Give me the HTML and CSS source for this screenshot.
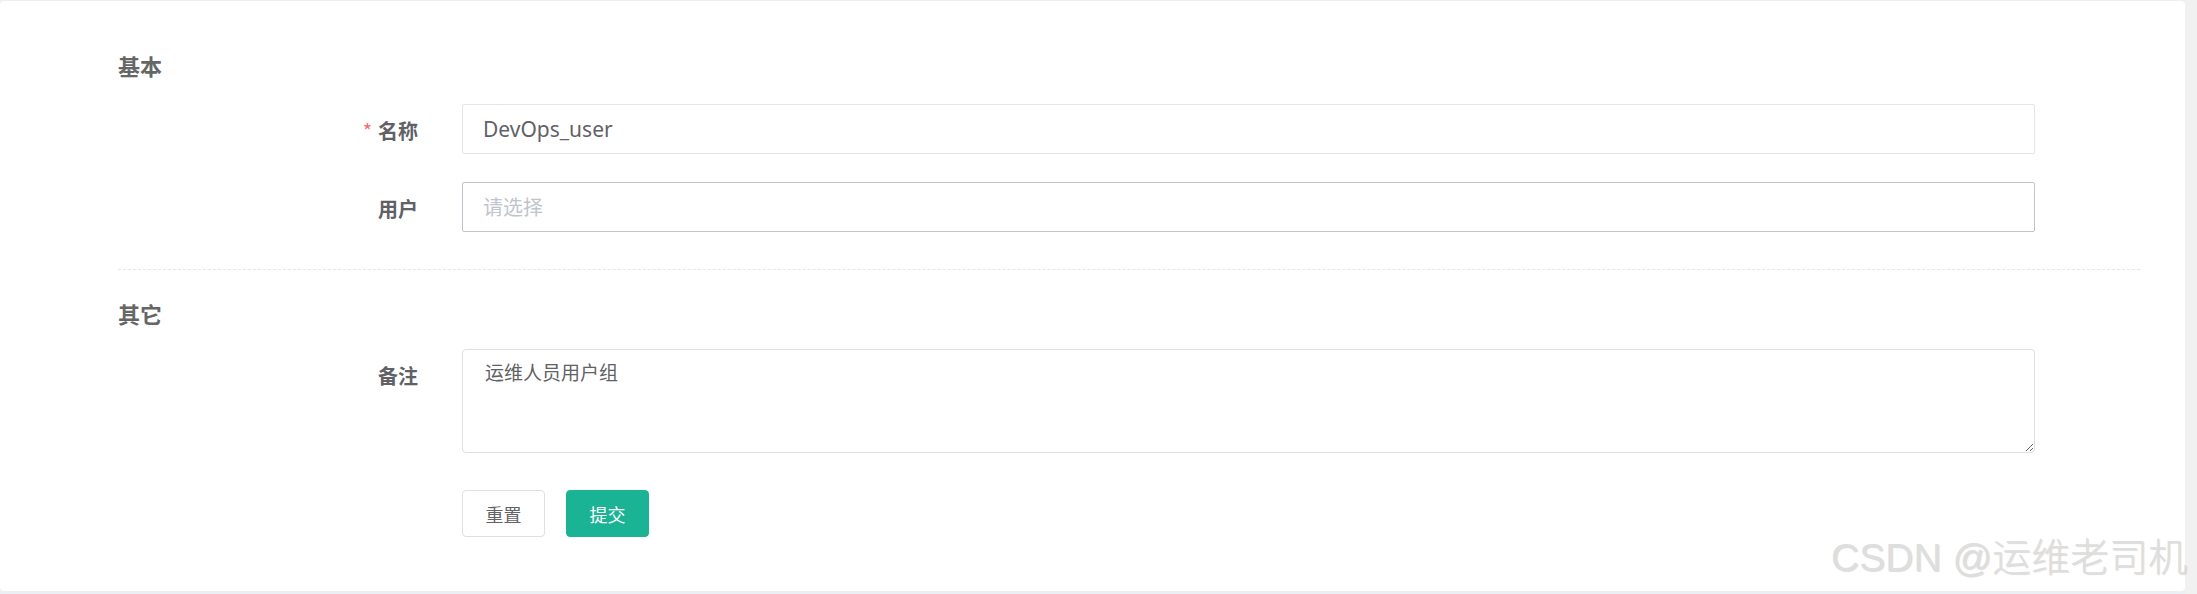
FILE: index.html
```html
<!DOCTYPE html>
<html lang="zh-CN">
<head>
<meta charset="utf-8">
<title>用户组</title>
<link rel="stylesheet" href="styles.css">
</head>
<body>
<div class="page">
  <main class="main">
    <div class="card">
      <h3 class="section-title">基本</h3>
      <div class="form-row">
        <label class="form-label"><span class="required">*</span>名称</label>
        <input class="form-input" type="text" value="DevOps_user">
      </div>
      <div class="form-row row-second">
        <label class="form-label">用户</label>
        <input class="form-input input-hover" type="text" placeholder="请选择">
      </div>
      <div class="divider"></div>
      <h3 class="section-title title-other">其它</h3>
      <div class="form-row row-textarea">
        <label class="form-label">备注</label>
        <textarea class="form-textarea">运维人员用户组</textarea>
      </div>
      <div class="form-row row-buttons">
        <span></span>
        <div class="buttons">
          <button class="btn btn-default" type="button">重置</button>
          <button class="btn btn-primary" type="button">提交</button>
        </div>
      </div>
      <div class="watermark">CSDN @运维老司机</div>
    </div>
  </main>
  <div class="scroll-track"></div>
</div>
</body>
</html>
```

FILE: styles.css
```css
html, body {
  margin: 0;
  padding: 0;
}
body {
  font-family: "Noto Sans", "Noto Sans CJK SC", sans-serif;
  color: #606266;
  width: 2197px;
  height: 594px;
  overflow: hidden;
}
.page {
  display: flex;
  height: 594px;
}
.main {
  flex: 1;
  background: #eceff4;
  padding: 1px 0 3px 0;
}
.scroll-track {
  width: 12px;
  background: #f1f1f1;
}
.card {
  position: relative;
  box-sizing: border-box;
  height: 590px;
  background: #ffffff;
  border-radius: 4px;
  padding: 49px 45px 0 118px;
}
.section-title {
  margin: 0;
  font-family: "Noto Sans CJK SC", sans-serif;
  font-size: 22px;
  line-height: 30px;
  font-weight: 700;
  color: #666666;
}
.form-row {
  display: grid;
  grid-template-columns: 300px 1573px;
  column-gap: 44px;
  align-items: start;
  margin-top: 24px;
}
.row-second {
  margin-top: 28px;
}
.form-label {
  font-family: "Noto Sans CJK SC", sans-serif;
  font-size: 20px;
  font-weight: 700;
  line-height: 50px;
  padding-top: 2px;
  height: 48px;
  text-align: right;
  color: #5f6166;
}
.required {
  color: #f56c6c;
  font-weight: 400;
  margin-right: 6px;
  font-size: 20px;
}
.form-input {
  box-sizing: border-box;
  height: 50px;
  width: 100%;
  border: 1px solid #e5e5e5;
  border-radius: 2px;
  padding: 0 20px;
  font-family: "Noto Sans", "Noto Sans CJK SC", sans-serif;
  font-size: 21px;
  color: #5f6166;
  outline: none;
  background: #fff;
}
.input-hover {
  border-color: #bfc5cc;
}
.form-input::placeholder {
  color: #c0c4cc;
  font-family: "Noto Sans CJK SC", sans-serif;
  font-size: 20px;
}
.divider {
  margin-top: 37px;
  border-top: 1px dashed #e6e6e6;
}
.title-other {
  margin-top: 28px;
}
.row-textarea {
  margin-top: 21px;
}
.form-textarea {
  box-sizing: border-box;
  width: 100%;
  height: 104px;
  border: 1px solid #dcdfe6;
  border-radius: 4px;
  padding: 7px 22px;
  font-family: "Noto Sans CJK SC", sans-serif;
  font-size: 19px;
  line-height: 30px;
  color: #606266;
  resize: both;
  outline: none;
}
.row-buttons {
  margin-top: 37px;
}
.buttons {
  display: flex;
  gap: 21px;
}
.btn {
  box-sizing: border-box;
  width: 83px;
  height: 47px;
  border-radius: 4px;
  font-family: "Noto Sans CJK SC", sans-serif;
  font-size: 18px;
  padding: 0;
  cursor: pointer;
}
.btn-default {
  background: #ffffff;
  border: 1px solid #dcdfe6;
  color: #606266;
}
.btn-primary {
  background: #1ab394;
  border: 1px solid #1ab394;
  color: #ffffff;
}
.watermark {
  position: absolute;
  right: -2px;
  bottom: 11px;
  font-family: "Liberation Sans", "Noto Sans CJK SC", sans-serif;
  font-size: 39px;
  font-weight: 300;
  line-height: 44px;
  color: #dedede;
  text-shadow: 1px 1px 1px rgba(0, 0, 0, 0.14);
  white-space: nowrap;
}
```
